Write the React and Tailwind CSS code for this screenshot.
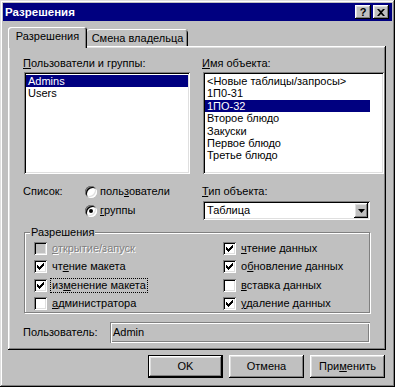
import React from "react";

const raised =
  "shadow-[inset_-1px_-1px_0_#000,inset_1px_1px_0_#fff,inset_-2px_-2px_0_#808080,inset_2px_2px_0_#dfdfdf]";
const sunken =
  "shadow-[inset_1px_1px_0_#808080,inset_-1px_-1px_0_#fff,inset_2px_2px_0_#000,inset_-2px_-2px_0_#dfdfdf]";

// text with an access-key letter underlined
const Acc = ({ text, i }) => (
  <span className="whitespace-nowrap">
    {text.slice(0, i)}
    <span className="underline underline-offset-[1px]">{text[i]}</span>
    {text.slice(i + 1)}
  </span>
);

const Check = ({ checked, disabled }) => (
  <span
    className={`w-[13px] h-[13px] shrink-0 flex items-center justify-center ${
      disabled ? "bg-[#c0c0c0]" : "bg-white"
    } ${sunken}`}
  >
    {checked && (
      <svg width="7" height="7" viewBox="0 0 7 7">
        <path d="M0 2h1v1h1v1h1V3h1V2h1V1h1V0h1v3h-1v1h-1v1h-1v1h-1v1H2V6H1V5H0z" fill="#000" />
      </svg>
    )}
  </span>
);

const Radio = ({ checked }) => (
  <span
    className={`w-[12px] h-[12px] shrink-0 rounded-full bg-white flex items-center justify-center ${sunken}`}
  >
    {checked && <span className="w-[4px] h-[4px] rounded-full bg-black" />}
  </span>
);

const leftPerms = [
  { label: "открытие/запуск", key: 0, checked: false, disabled: true },
  { label: "чтение макета", key: 2, checked: true },
  { label: "изменение макета", key: 2, checked: true, focus: true },
  { label: "администратора", key: 0, checked: false },
];

const rightPerms = [
  { label: "чтение данных", key: 0, checked: true },
  { label: "обновление данных", key: 1, checked: true },
  { label: "вставка данных", key: 0, checked: false },
  { label: "удаление данных", key: 0, checked: true },
];

const objects = [
  "<Новые таблицы/запросы>",
  "1П0-31",
  "1ПО-32",
  "Второе блюдо",
  "Закуски",
  "Первое блюдо",
  "Третье блюдо",
];

const PermRow = ({ p }) => (
  <div className="h-[18.5px] flex items-center gap-[5px]">
    <Check checked={p.checked} disabled={p.disabled} />
    {p.disabled ? (
      <span className="text-[#808080] [text-shadow:1px_1px_0_#fff]">
        <Acc text={p.label} i={p.key} />
      </span>
    ) : p.focus ? (
      <span className="-ml-[2px] px-[1px] border border-dotted border-black leading-[13px]">
        <Acc text={p.label} i={p.key} />
      </span>
    ) : (
      <Acc text={p.label} i={p.key} />
    )}
  </div>
);

export default function App() {
  return (
    <div className="w-[395px] h-[387px] bg-[#c0c0c0] p-[3px] font-['Liberation_Sans',Arial,sans-serif] text-[11px] leading-[13px] text-black shadow-[inset_-1px_-1px_0_#000,inset_1px_1px_0_#dfdfdf,inset_-2px_-2px_0_#808080,inset_2px_2px_0_#fff]">
      {/* title bar */}
      <div className="h-[18px] bg-[#000080] flex items-center justify-between pl-[2px] pr-[3px]">
        <span className="text-white font-bold text-[11.5px]">Разрешения</span>
        <div className="flex gap-[2px]">
          <div className={`w-[16px] h-[14px] bg-[#c0c0c0] flex items-center justify-center font-bold text-[11px] ${raised}`}>
            ?
          </div>
          <div className={`w-[16px] h-[14px] bg-[#c0c0c0] flex items-center justify-center ${raised}`}>
            <svg width="8" height="7" viewBox="0 0 8 7">
              <path d="M0 0h2l2 2 2-2h2L5 3.5 8 7H6L4 5 2 7H0l3-3.5z" fill="#000" />
            </svg>
          </div>
        </div>
      </div>

      <div className="ml-[5px] mr-[6px]">
        {/* tabs */}
        <div className="flex items-end h-[25px]">
          <div className="relative z-10 h-[21px] -mb-[2px] w-[79px] bg-[#c0c0c0] rounded-t-[3px] pb-[3px] flex items-center justify-center shadow-[inset_1px_1px_0_#fff,inset_-1px_0_0_#000,inset_-2px_0_0_#808080]">
            Разрешения
          </div>
          <div className="h-[17px] w-[101px] rounded-t-[3px] flex items-center justify-center pt-[1px] shadow-[inset_0_1px_0_#fff,inset_-1px_0_0_#000,inset_-2px_0_0_#808080]">
            Смена владельца
          </div>
        </div>

        {/* tab panel */}
        <div className={`h-[304px] pt-[11px] pl-[16px] pr-[2px] ${raised}`}>
          <div className="grid grid-cols-[166px_181px] gap-x-[13px]">
            {/* users list */}
            <div>
              <div className="-ml-[1px]">
                <Acc text="Пользователи и группы:" i={0} />
              </div>
              <div className={`mt-[2px] h-[102px] bg-white pt-[3px] px-[2px] ${sunken}`}>
                <div className="h-[12.4px] leading-[12.4px] bg-[#000080] text-white px-[2px]">Admins</div>
                <div className="h-[12.4px] leading-[12.4px] px-[2px]">Users</div>
              </div>
            </div>

            {/* objects list */}
            <div>
              <div className="-ml-[1px]">
                <Acc text="Имя объекта:" i={0} />
              </div>
              <div className={`mt-[2px] h-[102px] bg-white pt-[3px] px-[2px] ${sunken}`}>
                <div className="w-[165px]">
                  {objects.map((o) => (
                    <div
                      key={o}
                      className={`h-[12.4px] leading-[12.4px] px-[2px] whitespace-nowrap ${
                        o === "1ПО-32" ? "bg-[#000080] text-white" : ""
                      }`}
                    >
                      {o}
                    </div>
                  ))}
                </div>
              </div>
            </div>

            {/* list type */}
            <div className="mt-[8px]">
              <div className="h-[19px] flex items-center">
                <span className="-ml-[1px] w-[62px]">Список:</span>
                <Radio />
                <span className="ml-[3px]">
                  <Acc text="пользователи" i={4} />
                </span>
              </div>
              <div className="h-[19px] flex items-center pl-[61px]">
                <Radio checked />
                <span className="ml-[3px]">
                  <Acc text="группы" i={0} />
                </span>
              </div>
            </div>

            {/* object type */}
            <div className="mt-[11px]">
              <div className="-ml-[1px]">
                <Acc text="Тип объекта:" i={0} />
              </div>
              <div className={`mt-[3px] w-[167px] h-[19px] bg-white p-[2px] flex items-center ${sunken}`}>
                <span className="flex-1 pl-[2px]">Таблица</span>
                <div className={`w-[14px] h-full bg-[#c0c0c0] flex items-center justify-center ${raised}`}>
                  <svg width="7" height="4" viewBox="0 0 7 4">
                    <path d="M0 0h7L3.5 4z" fill="#000" />
                  </svg>
                </div>
              </div>
            </div>
          </div>

          {/* permissions group */}
          <div className="relative mt-[12px] w-[346px] h-[81px] border border-[#808080] shadow-[1px_1px_0_#fff,inset_1px_1px_0_#fff] pt-[6px] pl-[9px]">
            <span className="absolute left-[5px] -top-[7px] px-[1px] bg-[#c0c0c0]">Разрешения</span>
            <div className="grid grid-cols-[189px_1fr]">
              <div>
                {leftPerms.map((p) => (
                  <PermRow key={p.label} p={p} />
                ))}
              </div>
              <div>
                {rightPerms.map((p) => (
                  <PermRow key={p.label} p={p} />
                ))}
              </div>
            </div>
          </div>

          {/* current user */}
          <div className="mt-[9px] w-[346px] h-[21px] flex items-center">
            <span className="-ml-[1px] w-[87px]">Пользователь:</span>
            <div className="flex-1 h-full flex items-center pl-[3px] shadow-[inset_1px_1px_0_#808080,inset_-1px_-1px_0_#fff,inset_2px_2px_0_#fff,inset_-2px_-2px_0_#808080]">
              Admin
            </div>
          </div>
        </div>
      </div>

      {/* buttons */}
      <div className="mt-[5px] mr-[7px] flex justify-end gap-[6px]">
        <div className="w-[75px] h-[23px] border border-black">
          <div className={`w-full h-full flex items-center justify-center ${raised}`}>OK</div>
        </div>
        <div className={`w-[75px] h-[23px] flex items-center justify-center ${raised}`}>Отмена</div>
        <div className={`w-[75px] h-[23px] flex items-center justify-center ${raised}`}>
          <Acc text="Применить" i={3} />
        </div>
      </div>
    </div>
  );
}
